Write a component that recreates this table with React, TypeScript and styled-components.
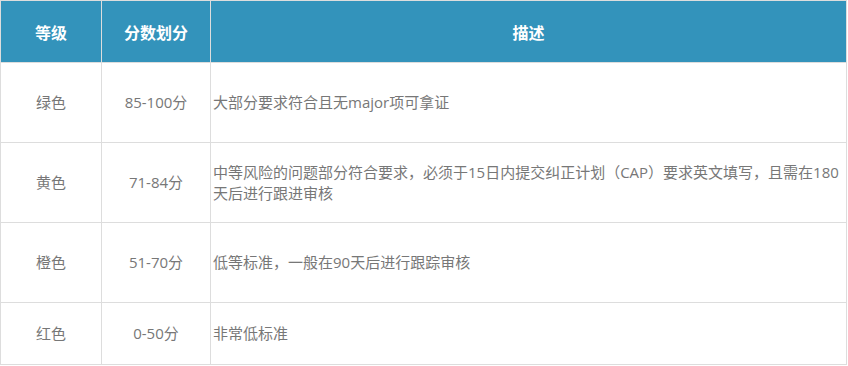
import { Fragment } from "react";
import styled, { createGlobalStyle } from "styled-components";

const GlobalStyle = createGlobalStyle`
  html, body {
    margin: 0;
    padding: 0;
    background: #fff;
  }
  body {
    font-family: "Open Sans", "Noto Sans CJK SC", sans-serif;
  }
`;

const rows = [
  { level: "绿色", score: "85-100分", desc: "大部分要求符合且无major项可拿证" },
  {
    level: "黄色",
    score: "71-84分",
    desc: "中等风险的问题部分符合要求，必须于15日内提交纠正计划（CAP）要求英文填写，且需在180天后进行跟进审核",
  },
  { level: "橙色", score: "51-70分", desc: "低等标准，一般在90天后进行跟踪审核" },
  { level: "红色", score: "0-50分", desc: "非常低标准" },
];

const Table = styled.div`
  display: grid;
  grid-template-columns: 100px 108px 635px;
  grid-template-rows: 61px 79px 79px 79px 61px;
  gap: 1px;
  width: 845px;
  background: #dddddd;
  border: 1px solid #dddddd;
`;

const HeaderCell = styled.div`
  display: flex;
  align-items: center;
  justify-content: center;
  background: #3393bb;
  color: #fff;
  font-size: 16px;
  font-weight: bold;
`;

const Cell = styled.div<{ $left?: boolean }>`
  display: flex;
  align-items: center;
  justify-content: ${(p) => (p.$left ? "flex-start" : "center")};
  padding: ${(p) => (p.$left ? "0 2px" : "0")};
  background: #fff;
  color: #777;
  font-size: 15px;
  line-height: 21px;
`;

export default function App() {
  return (
    <>
      <GlobalStyle />
      <Table>
        <HeaderCell>等级</HeaderCell>
        <HeaderCell>分数划分</HeaderCell>
        <HeaderCell>描述</HeaderCell>
        {rows.map((row) => (
          <Fragment key={row.level}>
            <Cell>{row.level}</Cell>
            <Cell>{row.score}</Cell>
            <Cell $left>{row.desc}</Cell>
          </Fragment>
        ))}
      </Table>
    </>
  );
}
